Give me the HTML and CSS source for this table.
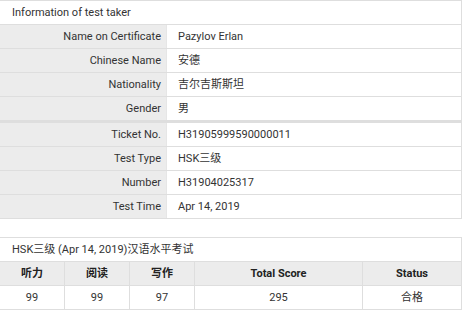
FILE: index.html
```html
<!DOCTYPE html>
<html>
<head>
<meta charset="utf-8">
<link rel="stylesheet" href="styles.css">
</head>
<body>
<div class="page">
  <section class="card">
    <div class="title">Information of test taker</div>
    <div class="row"><div class="label">Name on Certificate</div><div class="value">Pazylov Erlan</div></div>
    <div class="row"><div class="label">Chinese Name</div><div class="value">安德</div></div>
    <div class="row"><div class="label">Nationality</div><div class="value">吉尔吉斯斯坦</div></div>
    <div class="row"><div class="label">Gender</div><div class="value">男</div></div>
    <div class="sep"></div>
    <div class="row"><div class="label">Ticket No.</div><div class="value">H31905999590000011</div></div>
    <div class="row"><div class="label">Test Type</div><div class="value">HSK三级</div></div>
    <div class="row"><div class="label">Number</div><div class="value">H31904025317</div></div>
    <div class="row"><div class="label">Test Time</div><div class="value">Apr 14, 2019</div></div>
  </section>
  <section class="card scores">
    <div class="title">HSK三级 (Apr 14, 2019)汉语水平考试</div>
    <div class="grid head">
      <div>听力</div><div>阅读</div><div>写作</div><div>Total Score</div><div>Status</div>
    </div>
    <div class="grid data">
      <div>99</div><div>99</div><div>97</div><div>295</div><div>合格</div>
    </div>
  </section>
</div>
</body>
</html>
```
FILE: styles.css
```css
* { box-sizing: border-box; }
body {
  margin: 0;
  background: #fff;
  font-family: Roboto, "Noto Sans CJK SC", sans-serif;
  font-size: 11px;
  color: #333;
}
.page {
  width: 462px;
  display: flex;
  flex-direction: column;
  gap: 18px;
}
.card {
  border-top: 1px solid #dedede;
  border-right: 1px solid #dedede;
}
.title {
  height: 24px;
  line-height: 23px;
  padding-left: 12px;
  border-bottom: 1px solid #dedede;
  background: #fff;
}
.row {
  display: grid;
  grid-template-columns: 166px 1fr;
  height: 24px;
  border-bottom: 1px solid #dedede;
}
.label {
  background: #ececec;
  text-align: right;
  padding-right: 5px;
  line-height: 23px;
}
.value {
  padding-left: 11px;
  line-height: 23px;
  border-left: 1px solid #e6e6e6;
}
.sep {
  height: 2px;
  background: #dedede;
}
.grid {
  display: grid;
  grid-template-columns: 64px 65px 65px 168px 1fr;
  height: 24px;
  border-bottom: 1px solid #dedede;
  text-align: center;
  line-height: 23px;
}
.grid > div + div { border-left: 1px solid #dedede; }
.head { background: #ececec; font-weight: bold; color: #222; }
.data { background: #fff; }
```
